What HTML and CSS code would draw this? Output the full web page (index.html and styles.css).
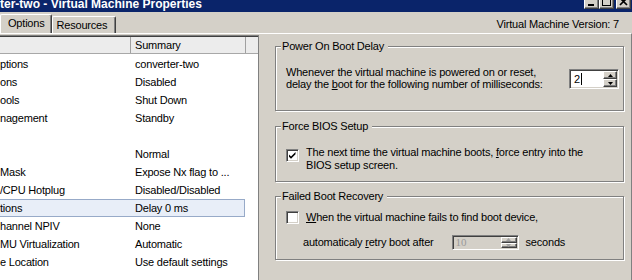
FILE: index.html
```html
<!DOCTYPE html>
<html>
<head>
<meta charset="utf-8">
<link rel="stylesheet" href="styles.css">
</head>
<body>
<div class="titlebar">
  <div class="title">ter-two - Virtual Machine Properties</div>
  <div class="tbtns">
    <div class="tbtn"><svg width="13" height="12" viewBox="0 0 13 12"><rect x="3" y="8" width="6" height="2" fill="#000"/></svg></div>
    <div class="tbtn"><svg width="13" height="12" viewBox="0 0 13 12"><path d="M2 1h9v9H2z M3 3v6h7V3z" fill="#000" fill-rule="evenodd"/></svg></div>
    <div class="tbtn close"><svg width="13" height="12" viewBox="0 0 13 12"><path d="M3 2 L10 9 M10 2 L3 9" stroke="#000" stroke-width="1.7"/></svg></div>
  </div>
</div>
<div class="tabbar">
  <div class="tabs">
    <div class="tab active">Options</div>
    <div class="tab">Resources</div>
  </div>
  <div class="version">Virtual Machine Version: 7</div>
</div>
<div class="panel">
  <div class="list">
    <div class="lhead">
      <div class="hc1"></div>
      <div class="hc2">Summary</div>
      <div class="hc3"></div>
    </div>
    <div class="rows">
      <div class="row"><span class="c1">ptions</span><span class="c2">converter-two</span></div>
      <div class="row"><span class="c1">ons</span><span class="c2">Disabled</span></div>
      <div class="row"><span class="c1">ools</span><span class="c2">Shut Down</span></div>
      <div class="row"><span class="c1">nagement</span><span class="c2">Standby</span></div>
      <div class="row"><span class="c1"></span><span class="c2"></span></div>
      <div class="row"><span class="c1"></span><span class="c2">Normal</span></div>
      <div class="row"><span class="c1">Mask</span><span class="c2">Expose Nx flag to ...</span></div>
      <div class="row"><span class="c1">/CPU Hotplug</span><span class="c2">Disabled/Disabled</span></div>
      <div class="row sel"><span class="c1">tions</span><span class="c2">Delay 0 ms</span></div>
      <div class="row"><span class="c1">hannel NPIV</span><span class="c2">None</span></div>
      <div class="row"><span class="c1">MU Virtualization</span><span class="c2">Automatic</span></div>
      <div class="row"><span class="c1">e Location</span><span class="c2">Use default settings</span></div>
    </div>
  </div>
  <div class="right">
    <fieldset class="group g1">
      <legend>Power On Boot Delay</legend>
      <div class="body">
        <div class="text">Whenever the virtual machine is powered on or reset,<br>delay the <u>b</u>oot for the following number of milliseconds:</div>
        <div class="spin spin1">
          <div class="sval">2<span class="caret"></span></div>
          <div class="sbtns">
            <div class="sb"><svg width="5" height="3" viewBox="0 0 5 3"><path d="M2.5 0 L5 3 H0 Z" fill="#000"/></svg></div>
            <div class="sb"><svg width="5" height="3" viewBox="0 0 5 3"><path d="M0 0 H5 L2.5 3 Z" fill="#000"/></svg></div>
          </div>
        </div>
      </div>
    </fieldset>
    <fieldset class="group g2">
      <legend>Force BIOS Setup</legend>
      <div class="body">
        <div class="cb"><svg width="9" height="9" viewBox="0 0 9 9"><path d="M1 3.5 L3 5.5 L7.5 1 L7.5 3.2 L3 7.7 L1 5.7 Z" fill="#000"/></svg></div>
        <div class="text">The next time the virtual machine boots, <u>f</u>orce entry into the<br>BIOS setup screen.</div>
      </div>
    </fieldset>
    <fieldset class="group g3">
      <legend>Failed Boot Recovery</legend>
      <div class="body">
        <div class="r1">
          <div class="cb"></div>
          <div class="text"><u>W</u>hen the virtual machine fails to find boot device,</div>
        </div>
        <div class="r2">
          <span>automaticaly <u>r</u>etry boot after</span>
          <div class="spin spin2">
            <div class="sval">10</div>
            <div class="sbtns">
              <div class="sb"><svg width="5" height="3" viewBox="0 0 5 3"><path d="M2.5 0 L5 3 H0 Z" fill="#a0a0a0"/></svg></div>
              <div class="sb"><svg width="5" height="3" viewBox="0 0 5 3"><path d="M0 0 H5 L2.5 3 Z" fill="#a0a0a0"/></svg></div>
            </div>
          </div>
          <span class="secs">seconds</span>
        </div>
      </div>
    </fieldset>
  </div>
</div>
</body>
</html>
```
FILE: styles.css
```css
* { box-sizing: border-box; }
body {
  margin: 0;
  width: 632px;
  height: 280px;
  overflow: hidden;
  background: #d4d0c8;
  font-family: "Liberation Sans", Arial, sans-serif;
  font-size: 11px;
  letter-spacing: -0.2px;
  color: #000;
}
.titlebar {
  height: 12px;
  background: #0a246a;
  display: flex;
  justify-content: space-between;
  overflow: hidden;
}
.title {
  color: #fff;
  font-weight: bold;
  font-size: 12px;
  line-height: 14px;
  letter-spacing: 0;
  align-self: flex-end;
  margin-bottom: 1px;
  white-space: nowrap;
}
.tbtns {
  display: flex;
  margin-top: -5px;
  margin-right: 1px;
  height: 14px;
}
.tbtn {
  width: 15px;
  height: 14px;
  background: #d4d0c8;
  border: 1px solid;
  border-color: #fff #404040 #404040 #fff;
  box-shadow: inset -1px -1px #808080;
  display: flex;
  align-items: flex-start;
  justify-content: center;
}
.tbtn.close { margin-left: 2px; }
.tabbar {
  height: 21px;
  display: flex;
  justify-content: space-between;
  align-items: flex-end;
}
.tabs { display: flex; align-items: flex-end; }
.tab {
  height: 17px;
  line-height: 16px;
  border-top: 1px solid #fff;
  border-left: 1px solid #fff;
  border-right: 1px solid #404040;
  box-shadow: inset -1px 0 #808080;
  border-radius: 2px 2px 0 0;
  padding: 0 8px 0 4px;
}
.tab.active {
  height: 19px;
  line-height: 17px;
  padding: 0 6px 0 7px;
}
.version {
  align-self: center;
  padding-right: 13px;
  margin-top: 2px;
}
.panel {
  display: flex;
  height: 247px;
  border-top: 1px solid #fff;
  border-right: 1px solid #808080;
}
.list {
  width: 259px;
  margin-top: 1px;
  padding-top: 1px;
  background: #fff;
  border-top: 1px solid #808080;
  border-right: 1px solid #808080;
  box-shadow: inset 0 1px #404040;
}
.lhead {
  display: flex;
  height: 17px;
  background: #ececec;
  border-bottom: 1px solid #a8a8a8;
}
.hc1 { width: 131px; border-right: 1px solid #a0a0a0; }
.hc2 {
  width: 115px;
  border-right: 1px solid #a0a0a0;
  padding-left: 4px;
  line-height: 16px;
}
.hc3 { flex: 1; }
.rows { padding-top: 1px; }
.row {
  display: flex;
  height: 18px;
  line-height: 16px;
  width: 247px;
  margin-left: -2px;
  border: 1px solid transparent;
  white-space: nowrap;
}
.row.sel {
  background: #e8eef8;
  border-color: #97aac8;
}
.c1 { width: 136px; padding-left: 1px; overflow: hidden; }
.c2 { flex: 1; }
.right {
  flex: 1;
  padding: 6px 7px 0 16px;
}
.group {
  margin: 0;
  padding: 0;
  min-width: 0;
  border: 1px solid #808080;
  box-shadow: 1px 1px 0 #fff, inset 1px 1px 0 #fff;
}
.group legend {
  margin-left: 5px;
  padding: 0 4px 0 1px;
  line-height: 13px;
  background: #d4d0c8;
}
.g2 { margin-top: 9px; }
.g3 { margin-top: 8px; }
.g1 .body {
  display: flex;
  align-items: flex-start;
  padding: 13px 4px 20px 10px;
}
.g1 .text {
  flex: 1;
  line-height: 12px;
  white-space: nowrap;
}
.spin {
  display: flex;
  border: 1px solid;
  border-color: #808080 #fff #fff #808080;
  box-shadow: inset 1px 1px #404040, inset -1px -1px #d4d0c8;
  padding: 1px;
}
.spin1 {
  width: 50px;
  height: 20px;
  margin-top: 3px;
  background: #fff;
}
.sval {
  flex: 1;
  display: flex;
  align-items: center;
  padding-left: 3px;
}
.caret {
  display: inline-block;
  width: 1px;
  height: 12px;
  background: #000;
  margin-left: 1px;
}
.sbtns {
  display: flex;
  flex-direction: column;
  width: 14px;
}
.sb {
  flex: 1;
  background: #d4d0c8;
  border: 1px solid;
  border-color: #fff #404040 #404040 #fff;
  box-shadow: inset -1px -1px #808080;
  display: flex;
  align-items: center;
  justify-content: center;
}
.g2 .body {
  display: flex;
  align-items: flex-start;
  padding: 13px 4px 9px 10px;
  line-height: 13px;
}
.cb {
  width: 13px;
  height: 13px;
  flex: none;
  background: #fff;
  border: 1px solid;
  border-color: #808080 #fff #fff #808080;
  box-shadow: inset 1px 1px #404040, inset -1px -1px #d4d0c8;
  display: flex;
  align-items: center;
  justify-content: center;
  margin-right: 7px;
}
.g2 .cb { margin-top: 3px; }
.g2 .text { white-space: nowrap; }
.g3 .body {
  padding: 8px 4px 9px 10px;
  line-height: 13px;
}
.r1 { display: flex; align-items: flex-start; }
.r2 {
  display: flex;
  align-items: center;
  height: 15px;
  margin-top: 11px;
  padding-left: 17px;
  white-space: nowrap;
}
.spin2 {
  width: 67px;
  height: 15px;
  margin-left: 18px;
  background: #d4d0c8;
}
.spin2 .sval {
  color: #9a9a9a;
  font-family: "Liberation Serif", serif;
  font-size: 11px;
  letter-spacing: 0;
  padding-left: 2px;
}
.spin2 .sbtns { width: 16px; }
.secs { margin-left: 7px; }
```
